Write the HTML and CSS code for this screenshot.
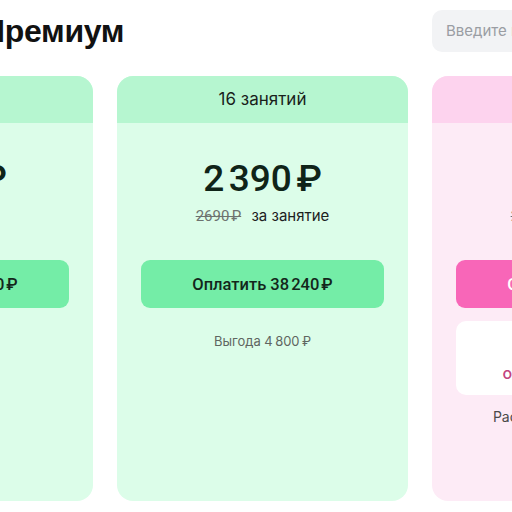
FILE: index.html
```html
<!DOCTYPE html>
<html lang="ru">
<head>
<meta charset="utf-8">
<title>Премиум</title>
<link rel="stylesheet" href="styles.css">
</head>
<body>
<div class="page">
  <header class="top">
    <h1 class="title">Премиум</h1>
    <div class="search">Введите промокод</div>
  </header>

  <div class="plans">
    <section class="plan plan-green">
      <div class="plan-head">8 занятий</div>
      <div class="price">2&#8239;590&#8239;₽</div>
      <div class="per">за занятие</div>
      <button class="pay">Оплатить 20&#8239;720&#8239;₽</button>
      <div class="note">Выгода 800&#8239;₽</div>
    </section>

    <section class="plan plan-green">
      <div class="plan-head">16 занятий</div>
      <div class="price">2&#8239;390&#8239;₽</div>
      <div class="per"><s class="old">2690&#8239;₽</s> за занятие</div>
      <button class="pay">Оплатить 38&#8239;240&#8239;₽</button>
      <div class="note">Выгода 4&#8239;800&#8239;₽</div>
    </section>

    <section class="plan plan-pink">
      <div class="plan-head">32 занятия</div>
      <div class="price">2&#8239;190&#8239;₽</div>
      <div class="per"><s class="old">2690&#8239;₽</s> за занятие</div>
      <button class="pay">Оплатить 70&#8239;080&#8239;₽</button>
      <div class="split">
        <div class="split-title">Оплата частями</div>
        <div class="split-sum">от 5 840 ₽ в месяц</div>
      </div>
      <div class="note note-dark">Рассрочка на 6 месяцев</div>
    </section>
  </div>
</div>
</body>
</html>
```

FILE: styles.css
```css
html, body {
  margin: 0;
  padding: 0;
  background: #ffffff;
  overflow: hidden;
}

body {
  width: 512px;
  height: 512px;
  font-family: "Inter", "Noto Sans", sans-serif;
  color: #17211b;
}

.page {
  width: 921px;
  margin-left: -198px;
}

/* top bar: page title and promo code field */
.top {
  display: flex;
  align-items: center;
  padding: 10px 0 0;
  height: 42px;
}

.title {
  margin: 0 0 0 180px;
  font-family: "Liberation Sans", Arial, sans-serif;
  font-weight: 700;
  font-size: 32px;
  line-height: 42px;
  color: #111111;
  letter-spacing: -0.3px;
}

.search {
  margin-left: auto;
  width: 291px;
  height: 42px;
  box-sizing: border-box;
  padding: 0 14px;
  border-radius: 10px;
  background: #f2f3f5;
  color: #9a9da3;
  font-size: 15px;
  line-height: 42px;
  white-space: nowrap;
  overflow: hidden;
}

/* plan cards */
.plans {
  display: grid;
  grid-template-columns: repeat(3, 291px);
  column-gap: 24px;
  margin-top: 24px;
}

.plan {
  height: 425px;
  border-radius: 16px;
  overflow: hidden;
  display: flex;
  flex-direction: column;
  align-items: center;
  padding: 0 24px;
  box-sizing: border-box;
}

.plan-green { background: #dcfde9; }
.plan-pink  { background: #fdebf6; }

.plan-head {
  align-self: stretch;
  margin: 0 -24px;
  height: 47px;
  line-height: 47px;
  text-align: center;
  font-size: 17px;
  color: #1a1f1c;
}

.plan-green .plan-head { background: #b6f6d0; }
.plan-pink  .plan-head { background: #fdd3ee; }

.price {
  margin-top: 34px;
  font-family: "Roboto", sans-serif;
  font-weight: 500;
  font-size: 37px;
  line-height: 44px;
  letter-spacing: -0.8px;
  color: #0f2418;
  white-space: nowrap;
}

.per {
  margin-top: 5px;
  font-size: 15px;
  line-height: 20px;
  color: #1c211e;
  white-space: nowrap;
}

.old {
  font-family: "Roboto", sans-serif;
  color: #6d726f;
  margin-right: 6px;
}

.pay {
  margin-top: 34px;
  align-self: stretch;
  height: 48px;
  border: 0;
  border-radius: 9px;
  font-family: "Roboto", sans-serif;
  font-weight: 500;
  font-size: 16.5px;
  color: #13261b;
  white-space: nowrap;
  cursor: pointer;
}

.plan-green .pay { background: #74eda7; }
.plan-pink  .pay { background: #f866b8; color: #ffffff; }

.note {
  margin-top: 24px;
  font-size: 13px;
  line-height: 18px;
  color: #5f6661;
  white-space: nowrap;
}

.split {
  margin-top: 13px;
  align-self: stretch;
  box-sizing: border-box;
  height: 74px;
  padding: 14px 12px 12px;
  border-radius: 10px;
  background: #ffffff;
  display: flex;
  flex-direction: column;
  align-items: center;
  gap: 8px;
}

.split-title {
  font-size: 14px;
  line-height: 20px;
  color: #2a2a2a;
}

.split-sum {
  font-size: 16px;
  line-height: 20px;
  font-weight: 500;
  color: #c2447f;
  white-space: nowrap;
}

.note-dark {
  margin-top: 13px;
  font-size: 14px;
  color: #4a4a4a;
}
```
